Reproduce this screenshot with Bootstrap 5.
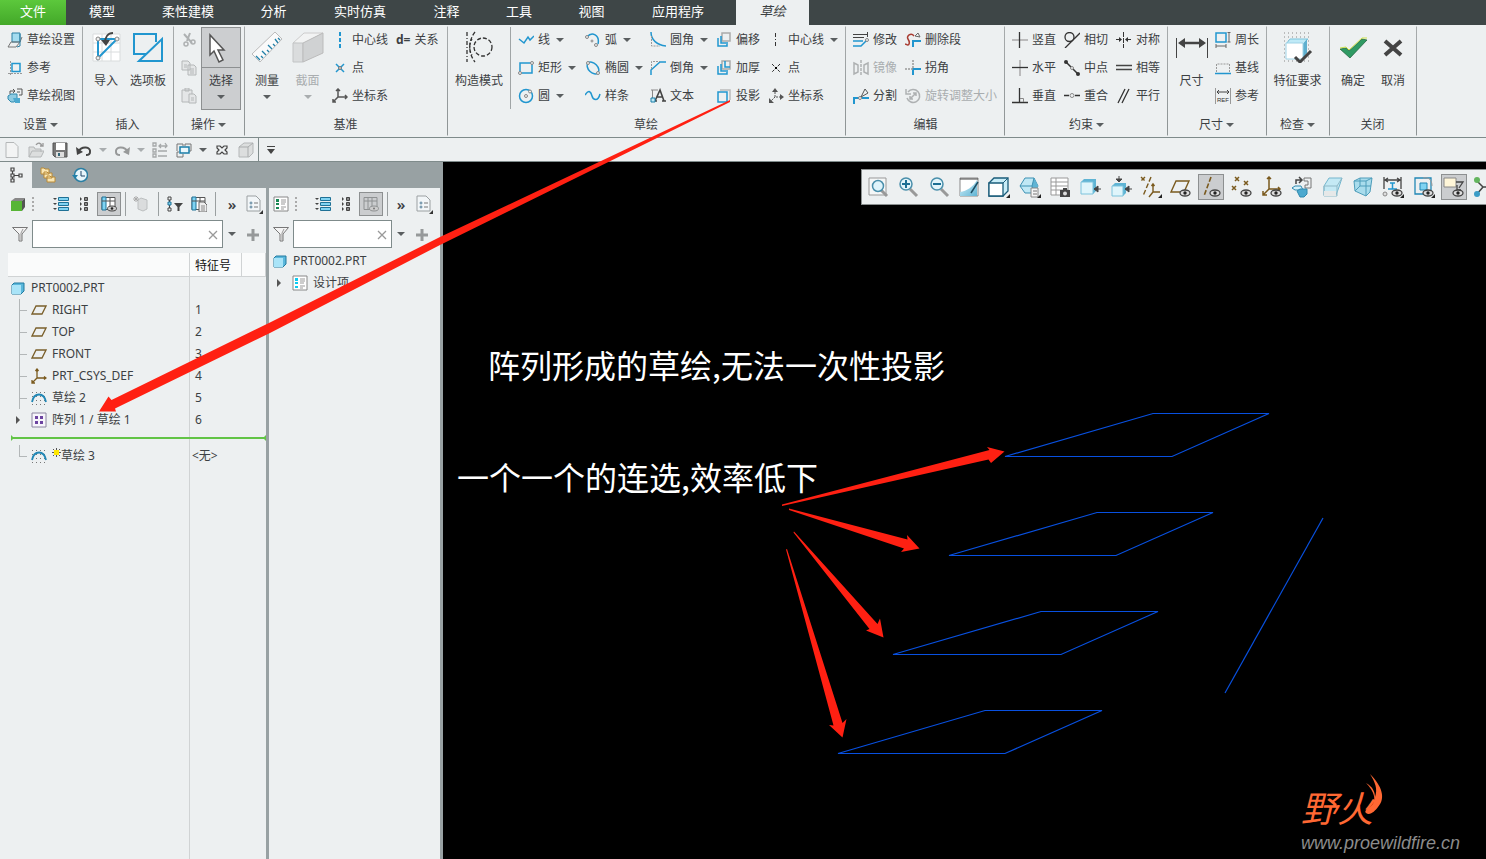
<!DOCTYPE html>
<html lang="zh-CN">
<head>
<meta charset="utf-8">
<meta name="viewport" content="width=device-width, initial-scale=1">
<title>PRT0002 - 草绘</title>
<link href="https://cdn.jsdelivr.net/npm/bootstrap@5.3.0/dist/css/bootstrap.min.css" rel="stylesheet">
<style>
:root{--panel:#edf0f1;--ink:#3c4043;--edge:#7f8b8b;--slate:#98a1a3}
body{font-family:"Noto Sans","Noto Sans CJK SC",sans-serif;font-size:12px;line-height:16px;color:var(--ink);background:var(--panel);overflow:hidden}
button{font:inherit;color:inherit;background:none;border:0;padding:0}
svg{flex:none;fill:none}
.i16{width:16px;height:16px}
.i20{width:22px;height:22px}
.i32{width:32px;height:32px}
.dim{color:#a9adaf}
.caret{width:0;height:0;border:4px solid transparent;border-top-color:#5a5e60;border-bottom:0;flex:none}
.dim .caret{border-top-color:#a9adaf}
/* menu tabs */
.menu-tabs{background:#3e4647;height:25px;font-size:13px}
.menu-tabs a{color:#fff;text-decoration:none;height:25px;line-height:22px;text-align:center}
.menu-tabs .file-tab{background:linear-gradient(#5cc83c,#43a829);width:66px}
.menu-tabs .now-tab{background:var(--panel);color:var(--ink);font-style:italic;width:73px}
.t71{width:71px}.t72{width:72px}.t74{width:74px}.t100{width:100px}.t102{width:102px}.t7{width:7px}
/* ribbon */
.ribbon{height:113px;border-bottom:1px solid var(--edge)}
.rgroup{position:relative;display:grid;grid-template-rows:84px 28px;padding-right:1px;border-right:1px solid;border-image:linear-gradient(transparent 2px,#a7abac 3px,#8d9394 109px,transparent 110px) 1}
.rgroup>.gbody{display:grid;align-items:start}
.glabel{display:flex;align-items:center;justify-content:center;gap:3px;padding-top:4px}
.rb{display:flex;align-items:center;gap:4px;height:28px;padding-top:2px;white-space:nowrap}
.rb .caret{margin-left:2px}
.big{display:flex;flex-direction:column;align-items:center;width:100%;white-space:nowrap}
.big svg{margin:6px 0 5px}
.big span{line-height:26px}
.big .caret{margin-top:1px}
.picked{background:#ccced0;border:1px solid #8d9091;margin-top:2px;height:83px}
.picked svg{margin:4px 0 3px}
.picked .low{border-top:1px solid #8d9091;width:100%;line-height:26px}
.g-set{width:83px}.g-set .gbody{padding-left:7px}
.g-ins{width:91px}.g-ins .gbody{grid-template-columns:42px 42px;padding-left:2px}
.g-op{width:71px}.g-op .gbody{grid-template-columns:20px 40px;padding-left:7px}
.g-dat{width:203px}.g-dat .gbody{grid-template-columns:40px 45px 64px 48px;padding-left:2px}
.g-sk{width:398px}.g-sk .gbody{grid-template-columns:62px 8px 67px 65px 66px 52px 76px}
.g-ed{width:159px}.g-ed .gbody{grid-template-columns:52px 100px;padding-left:7px}
.g-con{width:163px}.g-con .gbody{grid-template-columns:52px 52px 52px;padding-left:7px}
.g-dim{width:99px}.g-dim .gbody{grid-template-columns:47px 46px}
.g-chk{width:63px}.g-end{width:87px}.g-end .gbody{grid-template-columns:40px 40px;padding-left:3px}
.inner-line{border-left:1px solid #a0a5a6;height:82px;margin-top:2px}
/* quick access */
.quick{height:24px;border-bottom:1px solid var(--edge)}
.q24{width:24px;display:flex;justify-content:center}
.q14{width:14px;display:flex;justify-content:center}
.quick .stop{border-left:1px solid var(--edge);height:24px}
/* side panels */
.tree-panel{width:269px;border-right:3px solid var(--slate)}
.item-panel{width:174px;border-right:3px solid var(--slate)}
.ptabs{height:26px;background:var(--slate)}
.ptabs button{width:32px;height:26px}
.ptabs .on{background:var(--panel)}
.ptools{height:32px;display:grid;align-items:center;justify-items:center}
.tree-panel .ptools{padding-left:8px;grid-template-columns:20px 10px 12px 22px 24px 26px 6px 26px 8px 26px 22px 10px 24px 20px}
.item-panel .ptools{padding-left:2px;grid-template-columns:20px 10px 11px 22px 24px 26px 6px 22px 24px}
.toggle{background:#cbcdcf;border:1px solid #8d9091;width:24px;height:24px;display:flex;align-items:center;justify-content:center}
.bar{width:1px;height:24px;background:#9a9fa0}
.dots{width:2px;height:14px;background:repeating-linear-gradient(#aaa 0 2px,transparent 2px 4px)}
.more{font-size:15px;font-weight:600}
.find{height:28px;border:1px solid var(--edge);background:#fff;padding-right:4px}
.find input{width:100%;min-width:0;border:0;outline:0;background:none;height:26px}
.find+.caret{margin:0 11px 0 5px}
.tree-panel .add{margin-right:7px}.item-panel .add{margin-right:12px}
.tree-scroll{margin:5px 0 0 8px;background:linear-gradient(90deg,transparent 181px,#d0d3d4 181px 182px,transparent 182px)}
.tree-tbl{width:100%;table-layout:fixed;border-collapse:separate;border-spacing:0}
.tree-tbl th{font-weight:400;height:24px;background:#fafbfb;border-right:1px solid #d0d3d4;border-bottom:1px solid #d0d3d4;padding:2px 0 0 5px;color:#111}
.tree-tbl td{height:22px;padding:0 0 0 5px;white-space:nowrap}
.tree-tbl td:first-child{padding-left:2px}
.tree-tbl .line-cell{height:14px}
.tree-tbl .none-cell{padding-left:2px}
.node{display:flex;align-items:center;gap:5px;height:22px}
.item-nodes{margin-top:2px;padding-left:3px}
.fold-tri{margin:0 6px 0 5px}
.branch{width:17px;height:22px;margin-right:-1px;background:linear-gradient(#b3b7b8,#b3b7b8) 9px 0/1px 22px no-repeat,linear-gradient(#b3b7b8,#b3b7b8) 9px 11px/8px 1px no-repeat;flex:none}
.branch.last{background-size:1px 11px,8px 1px}
.branch.fold{background:none;display:flex;align-items:center;padding-left:6px}
.tri{width:0;height:0;border:4px solid transparent;border-left-color:#555;border-right:0}
.insert-line{height:2px;background:#62c446;margin-left:1px;display:flex;align-items:center;justify-content:space-between}
.insert-line::before,.insert-line::after{content:"";border:3px solid transparent}
.insert-line::before{border-left-color:#62c446;border-right:0}
.insert-line::after{border-right-color:#62c446;border-left:0}
/* graphics area */
.gfx{background:#000;min-width:0}
.view-bar{margin:7px 0 0 418px;height:36px;background:var(--panel);border:1px solid #8b9090;border-right:0;display:grid;grid-template-columns:repeat(20,minmax(0,1fr)) 17px;align-items:center;justify-items:center;overflow:hidden;padding-left:1px}
.view-bar button{width:26px;height:26px;display:flex;align-items:center;justify-content:center}
.view-bar .down{background:#cbcdcf;border:1px solid #8d9091}
.view-bar .cutoff{justify-content:start;justify-self:start;padding-left:4px}
.note{position:absolute;color:#fff;font-size:32px;line-height:40px;white-space:nowrap;font-family:"Noto Sans CJK SC",sans-serif}
.note-a{left:45px;top:182px}.note-b{left:14px;top:294px}
.scene{position:absolute;left:0;top:0;width:100%;height:100%}
.overlay{position:absolute;left:0;top:0;width:100%;height:100%;pointer-events:none}
.logo{position:absolute;right:24px;bottom:7px;width:161px;height:80px}
.logo-name{position:absolute;left:0;top:20px;color:#ff6833;font:italic 400 36px/36px "Liberation Sans","Noto Sans CJK SC",sans-serif;white-space:nowrap}
.logo-url{position:absolute;left:0;bottom:0;color:#8c8c8c;font:italic 18px/18px "Liberation Sans",sans-serif}
.logo svg{position:absolute;left:61px;top:2px;width:24px;height:52px}
</style>
</head>
<body class="d-flex flex-column vh-100 position-relative">

<svg width="0" height="0" class="position-absolute" aria-hidden="true">
<defs>
<linearGradient id="gl" x1="0" y1="0" x2="1" y2="1"><stop offset="0" stop-color="#d8f3fb"/><stop offset="1" stop-color="#5fb4d4"/></linearGradient>
<symbol id="setup" viewBox="0 0 16 16"><path d="M5 1h8v9H5z" fill="#a4dcf0" stroke="#2a7ea3"/><path d="M4 10h9l2-5M4 10l-3 5h8l4-5" stroke="#777"/><path d="M13 2v12l-3 1" stroke="#2a7ea3"/></symbol>
<symbol id="refs" viewBox="0 0 16 16"><path d="M5 3.500h8v8H5z" stroke="#2196cf" stroke-width="1.500"/><path d="M3.500 1v14M1 13.500h14" stroke="#999" stroke-dasharray="2 1"/></symbol>
<symbol id="skview" viewBox="0 0 16 16"><path d="M3 6V3h5M6 1l2 2-2 2M10 1h5v6h-3M10 4h3" stroke="#555"/><path d="M1 8l3-2h6v5l-3 3H4l-3-3z" fill="#8ecbe2" stroke="#2e89ae"/><path d="M6 10h7v5H8z" fill="#4ca9cf"/></symbol>
<symbol id="import" viewBox="0 0 32 32"><path d="M3 3h27v27H3z" fill="#fff"/><path d="M3 12h27M3 21h27M12 3v27M21 3v27M3 3h27v27H3z" stroke="#d9dcdd"/><path d="M8 8v19L27 8z" stroke="#2196cf" stroke-width="2"/><path d="M23 2c-5 0-8 4-8 10" stroke="#444" stroke-width="2"/><path d="M11 9h9l-4 6z" fill="#444"/><g fill="#eee" stroke="#888"><circle cx="8" cy="8" r="2"/><circle cx="27" cy="8" r="2"/><circle cx="8" cy="27" r="2"/></g></symbol>
<symbol id="palette" viewBox="0 0 32 32"><path d="M14 23H2V3h22v8M7 30L30 8v22z" stroke="#2196cf" stroke-width="2"/></symbol>
<symbol id="cut" viewBox="0 0 16 16" stroke="#aeb1b2"><path d="M3 2l8 9M9 1L6 9" stroke-width="2"/><circle cx="5" cy="12" r="2" stroke-width="1.500"/><circle cx="12" cy="10" r="2" stroke-width="1.500"/></symbol>
<symbol id="copy" viewBox="0 0 16 16" fill="#e4e6e7" stroke="#b4b7b8"><path d="M1 1h6l2 2v7H1zM7 5h6l2 2v8H7z"/><path d="M9 9h4M9 11h4M9 13h4M3 5h3M3 7h3"/></symbol>
<symbol id="paste" viewBox="0 0 16 16" fill="#e4e6e7" stroke="#b4b7b8"><path d="M1 2h10v12H1zM4 0h4v3H4z"/><path d="M8 6h5l2 2v7H8z"/><path d="M10 10h3M10 12h3"/></symbol>
<symbol id="cursor" viewBox="0 0 32 32"><path d="M5 3v20l4-4 5 11 4-2-5-10h6z" fill="#fff" stroke="#555" stroke-width="1.500"/></symbol>
<symbol id="ruler" viewBox="0 0 32 32"><path d="M1 23L24 1l7 7L9 31z" fill="#fafafa" stroke="#bbb"/><path d="M9 29l-4-4M12 27l-2-2M15 24l-4-4M18 21l-2-2M21 18l-4-4M24 15l-2-2M27 12l-3-4M29 9l-2-2" stroke="#2180a8" stroke-width="1.300"/></symbol>
<symbol id="section" viewBox="0 0 32 32"><path d="M1 12L12 2h19L11 13z" fill="#f2f3f3" stroke="#ccc"/><path d="M1 12h10v19H1z" fill="#dadcdd" stroke="#c2c4c5"/><path d="M11 12L31 2v20L11 31z" fill="#d0d2d3" stroke="#bbb"/></symbol>
<symbol id="cl" viewBox="0 0 16 16"><path d="M8 0v16" stroke="#2196cf" stroke-width="2" stroke-dasharray="4 2"/></symbol>
<symbol id="cl2" viewBox="0 0 16 16"><path d="M7.500 1v15" stroke="#333" stroke-dasharray="4 2 1 2"/></symbol>
<symbol id="pt" viewBox="0 0 16 16"><path d="M4 4l8 8M12 4l-8 8" stroke="#2196cf" stroke-width="1.500"/><circle cx="8" cy="8" r="1.500" fill="#ccc" stroke="#777"/></symbol>
<symbol id="pt2" viewBox="0 0 16 16"><path d="M4 4l8 8M12 4l-8 8" stroke="#333" stroke-dasharray="3 1"/><path d="M7 7h2v2H7z" fill="#000"/></symbol>
<symbol id="cs" viewBox="0 0 16 16" stroke="#555" stroke-width="1.500"><path d="M6 1v8h9M6 9l-5 5M4 3l2-2 2 2M13 7l2 2-2 2M1 11v3h3"/></symbol>
<symbol id="cs2" viewBox="0 0 16 16"><path d="M7 4v5h6M7 9l-5 5" stroke="#555" stroke-dasharray="2 1"/><path d="M4 4h6L7 0zM12 6v6l4-3zM1 10v5h5z" fill="#555"/></symbol>
<symbol id="cons" viewBox="0 0 32 32" stroke="#333" stroke-width="1.300"><circle cx="20" cy="16" r="9" stroke-dasharray="4 2"/><path d="M4 1v30" stroke-dasharray="4 2 1 2"/><path d="M12 1c-7 9-7 21 0 30" stroke-dasharray="4 2"/><path d="M9 8c-3 4-3 12 0 16" stroke-dasharray="2 2"/></symbol>
<symbol id="line" viewBox="0 0 16 16"><path d="M1 7l5 4 4-6 2 3 4-4" stroke="#2196cf" stroke-width="1.500"/></symbol>
<symbol id="rect" viewBox="0 0 16 16"><path d="M2 3h12v10H2z" stroke="#2196cf" stroke-width="1.500"/><g fill="#eee" stroke="#888"><circle cx="14" cy="3" r="1.500"/><circle cx="2" cy="13" r="1.500"/></g></symbol>
<symbol id="circ" viewBox="0 0 16 16"><circle cx="8" cy="8" r="6.500" stroke="#2196cf" stroke-width="1.500"/><g fill="#eee" stroke="#888"><circle cx="8" cy="8" r="1.500"/><circle cx="12" cy="3.500" r="1.500"/></g></symbol>
<symbol id="arc" viewBox="0 0 16 16"><path d="M2 5c5-6 13-2 11 7" stroke="#2196cf" stroke-width="1.500"/><g fill="#eee" stroke="#888"><circle cx="2" cy="5" r="1.500"/><circle cx="11" cy="13" r="1.500"/><circle cx="7" cy="9" r="1"/></g></symbol>
<symbol id="ell" viewBox="0 0 16 16"><ellipse cx="8" cy="8" rx="7" ry="4.500" transform="rotate(45 8 8)" stroke="#2196cf" stroke-width="1.500"/><g fill="#eee" stroke="#888"><circle cx="3" cy="3" r="1.500"/><circle cx="13" cy="13" r="1.500"/></g></symbol>
<symbol id="spl" viewBox="0 0 16 16"><path d="M0 7c4-6 6-3 7 1s6 6 8-2" stroke="#2196cf" stroke-width="1.500"/></symbol>
<symbol id="fil" viewBox="0 0 16 16"><path d="M1 0c0 8 6 13 15 14" stroke="#2196cf" stroke-width="1.500"/><path d="M1.500 4v10H10" stroke="#999" stroke-dasharray="2 1"/></symbol>
<symbol id="cha" viewBox="0 0 16 16"><path d="M1 15v-5l9-8h6" stroke="#2196cf" stroke-width="1.500"/><path d="M1.500 9V1.500H10" stroke="#999" stroke-dasharray="2 1"/></symbol>
<symbol id="txt" viewBox="0 0 16 16"><path d="M1 2h7M2.500 2v8" stroke="#888"/><path d="M5 13l5-11 4 11M7 9h6M12 13h4M4 13h3" stroke="#444" stroke-width="1.600"/><path d="M1 10h4v4H1z" fill="#bde7f5" stroke="#1a7ea8"/></symbol>
<symbol id="off" viewBox="0 0 16 16"><path d="M6 1h8v8H6z" stroke="#aaa" stroke-width="1.500"/><path d="M5 4v7h7M2 6v8h9v-2" stroke="#2196cf" stroke-width="1.500"/></symbol>
<symbol id="thk" viewBox="0 0 16 16"><path d="M6 1h8v8H6z" stroke="#aaa" stroke-width="1.500"/><path d="M9 1v6h5M5 4v7h7M2 6v8h9v-2" stroke="#2196cf" stroke-width="1.500"/></symbol>
<symbol id="prj" viewBox="0 0 16 16"><path d="M4 2h10v10" stroke="#bbb" stroke-width="1.500"/><path d="M2 4v10h9V4z" stroke="#2196cf" stroke-width="1.500"/></symbol>
<symbol id="mod" viewBox="0 0 16 16"><path d="M0 2.500h15M14.500 0v5M0 5.500h11" stroke="#444"/><path d="M0 9h10M0 14h8l5-5" stroke="#2196cf" stroke-width="1.500"/><circle cx="14" cy="8" r="1.500" stroke="#888"/></symbol>
<symbol id="mir" viewBox="0 0 16 16" stroke="#aeb1b2" stroke-width="1.500"><path d="M1 3l4 2v7l-4 2zM15 3l-4 2v7l4 2z"/><path d="M8 0v16" stroke-dasharray="3 1"/></symbol>
<symbol id="div" viewBox="0 0 16 16"><path d="M1 16v-6h5M9 10h7" stroke="#2196cf" stroke-width="2"/><circle cx="7" cy="10" r="1.500" stroke="#888"/><path d="M8 9l4-8 3 4z" stroke="#555"/></symbol>
<symbol id="del" viewBox="0 0 16 16"><path d="M0 12c5 3 5-2 3-5s3-7 6-3" stroke="#a83c32" stroke-width="1.500"/><path d="M8 15V9h8" stroke="#2196cf" stroke-width="2"/><path d="M10 4l3-3 2 4z" stroke="#666"/></symbol>
<symbol id="cor" viewBox="0 0 16 16"><path d="M8 15V9h8" stroke="#2196cf" stroke-width="2"/><path d="M8 0v8M0 9h8" stroke="#999" stroke-dasharray="2 1" stroke-width="1.500"/></symbol>
<symbol id="rot" viewBox="0 0 16 16" stroke="#aeb1b2" stroke-width="1.500"><path d="M3 4a6.500 6.500 0 1 1-1 6M1 1v5h5M5 11l6-6M8 5h3v3M5 8v3h3"/></symbol>
<symbol id="ver" viewBox="0 0 16 16"><path d="M0 8h16" stroke="#aaa" stroke-width="1.500"/><path d="M7.500 0v16" stroke="#333" stroke-width="1.300"/></symbol>
<symbol id="hor" viewBox="0 0 16 16"><path d="M8 0v16" stroke="#aaa" stroke-width="1.500"/><path d="M0 7.500h16" stroke="#333" stroke-width="1.300"/></symbol>
<symbol id="per" viewBox="0 0 16 16"><path d="M7.500 0v14M0 14.500h16" stroke="#333" stroke-width="1.300"/><path d="M8 10.500h3.500V14" stroke="#888"/></symbol>
<symbol id="tan" viewBox="0 0 16 16" stroke="#333" stroke-width="1.300"><circle cx="5.500" cy="5" r="4.500"/><path d="M1 16L16 1"/></symbol>
<symbol id="mid" viewBox="0 0 16 16"><path d="M2 2l12 12" stroke="#333" stroke-width="1.500"/><circle cx="2" cy="2" r="2" fill="#333"/><circle cx="14" cy="14" r="2" fill="#333"/><circle cx="8" cy="8" r="1.500" fill="#eee" stroke="#888"/></symbol>
<symbol id="coi" viewBox="0 0 16 16"><path d="M0 7.500h5M11 7.500h5" stroke="#333" stroke-width="1.300"/><circle cx="8" cy="7.500" r="2" stroke="#888"/></symbol>
<symbol id="sym" viewBox="0 0 16 16"><path d="M7.500 0v16" stroke="#333" stroke-dasharray="5 1"/><path d="M0 7.500h5M10 7.500h5" stroke="#333"/><path d="M3 5l3 2.500L3 10zM12 5L9 7.500l3 2.500z" fill="#333"/></symbol>
<symbol id="eq" viewBox="0 0 16 16"><path d="M0 5.500h16M0 9.500h16" stroke="#444" stroke-width="1.300"/></symbol>
<symbol id="par" viewBox="0 0 16 16"><path d="M2 15L9 1M6 15l7-14" stroke="#333" stroke-width="1.300"/></symbol>
<symbol id="dim" viewBox="0 0 32 32"><path d="M.5 7v20M31.500 7v20" stroke="#444"/><path d="M6 12h20" stroke="#444" stroke-width="2.500"/><path d="M2 12l7-5v10zM30 12l-7-5v10z" fill="#444"/></symbol>
<symbol id="peri" viewBox="0 0 16 16"><path d="M1 1h10v9H1z" stroke="#2196cf" stroke-width="1.500"/><path d="M14 1v9M12.500 .5h3M12.500 10h3M1 14h10M1 12v4M11 12v4" stroke="#666"/></symbol>
<symbol id="base" viewBox="0 0 16 16"><path d="M1.500 12V4h13v8" stroke="#999" stroke-dasharray="2 1"/><path d="M0 13.500h16" stroke="#2196cf" stroke-width="1.500"/></symbol>
<symbol id="refd" viewBox="0 0 16 16"><path d="M.5 0v16M15.500 0v16" stroke="#999"/><path d="M2 4h12M4 2L2 4l2 2M12 2l2 2-2 2" stroke="#444"/><text x="2" y="14" font-size="6" font-family="Liberation Sans" fill="#333">REF</text></symbol>
<symbol id="freq" viewBox="0 0 32 32"><path d="M2 2h28M2 6h28M2 10h28M2 14h28M2 18h28M2 22h28M2 26h28M2 30h28" stroke="#888" stroke-dasharray="1 3"/><path d="M4 13l4-5h18l-5 5z" fill="#bfeaf7" stroke="#7dc4dc"/><path d="M21 13l4-5v14l-4 5z" fill="#5fb0cf"/><path d="M4 12h17v16H4z" fill="#fff" stroke="#9fd3e6"/><path d="M13 26l5 5 11-11" stroke="#444" stroke-width="3"/></symbol>
<symbol id="ok" viewBox="0 0 32 32"><path d="M3 18l6-1 3 3L25 8l5 1-17 18z" fill="#2f9a63" stroke="#1a5c38" stroke-width=".7"/><path d="M3 17l6-1 3 3L25 7h5" stroke="#cde34a"/></symbol>
<symbol id="no" viewBox="0 0 32 32"><path d="M8 10l16 14M24 10L8 24" stroke="#444" stroke-width="4"/></symbol>
<symbol id="new" viewBox="0 0 16 16"><path d="M2 .5h8l4 4v11H2z" fill="#f3f4f4" stroke="#b4b7b8"/></symbol>
<symbol id="open" viewBox="0 0 16 16"><path d="M1 15V5h5l1 2h6v3M1 15l3-6h12l-3 6z" fill="#dcdede" stroke="#b4b7b8"/><path d="M8 3c2-3 5-2 6 1M15 1v3h-3" stroke="#999" stroke-width="1.300"/></symbol>
<symbol id="save" viewBox="0 0 16 16"><path d="M1 1h14v14H3l-2-2z" fill="#777" stroke="#555"/><path d="M4 1h9v7H4z" fill="#fff"/><path d="M4 10h8v5H4z" fill="#ddd"/><path d="M6 11h2v3H6z" fill="#367"/></symbol>
<symbol id="undo" viewBox="0 0 16 16"><path d="M2 10c4-7 13-5 12 0 0 2-2 3-4 3" stroke="#444" stroke-width="2"/><path d="M0 5l1 8 6-3z" fill="#444"/></symbol>
<symbol id="regen" viewBox="0 0 16 16"><path d="M1 1h3v3H1zM1 7h3v3H1zM1 12h3v3H1zM6 9h9M6 14h9M7 4h8M9 2L7 4l2 2M13 1l2 3-2 2" stroke="#a5a8a9" stroke-width="1.300"/></symbol>
<symbol id="wins" viewBox="0 0 16 16"><path d="M1 9V2h6v2M9 4V2h6v7h-2" stroke="#777"/><path d="M4 5h9v6H4z" fill="#e9f7fc" stroke="#1a7ea8" stroke-width="1.500"/><path d="M3 10H1v5h6v-3" stroke="#777"/></symbol>
<symbol id="xx" viewBox="0 0 16 16"><path d="M3 4h3l2 2 2-2h3v2l-2 2 2 2v2h-3l-2-2-2 2H3v-2l2-2-2-2z" stroke="#444" stroke-width="1.200"/></symbol>
<symbol id="gbox" viewBox="0 0 16 16"><path d="M1 5l5-4h9v10l-4 4H1z" fill="#dcdede" stroke="#b4b7b8"/><path d="M1 5h9v10M10 5l5-4" stroke="#a9acad"/></symbol>
<symbol id="tree" viewBox="0 0 16 16" stroke="#444" stroke-width="1.200"><path d="M3 1h3v3H3zM3 7h3v3H3zM3 12h3v3H3zM11 7h3v3h-3zM4.500 4v3M4.500 10v2M6 8.500h5"/></symbol>
<symbol id="fold" viewBox="0 0 16 16" fill="#f9e6b3" stroke="#b98a36"><path d="M1 1h3l1 1h4v5H1zM4 5h3l1 1h4v5H4zM7 9h3l1 1h4v5H7z"/></symbol>
<symbol id="clock" viewBox="0 0 16 16"><circle cx="9" cy="8" r="6.500" fill="#e8f6fb" stroke="#2a7ea3" stroke-width="1.500"/><path d="M9 4v5h4" stroke="#246"/><path d="M0 8h6l-3 4z" fill="#2180a8"/></symbol>
<symbol id="gcube" viewBox="0 0 16 16"><path d="M1 5l4-3h10l-3 3z" fill="#888"/><path d="M12 5l3-3v9l-3 4z" fill="#555"/><path d="M1 5h11v10H1z" fill="#57b536"/></symbol>
<symbol id="lst" viewBox="0 0 16 16"><path d="M5.500 1.500h10v3h-10zM5.500 6.500h10v3h-10zM5.500 11.500h10v3h-10z" fill="#7fd3f2" stroke="#1f7196"/><path d="M0 2h4L2 4zM0 7h4L2 9zM0 12h4l-2 2z" fill="#444"/></symbol>
<symbol id="lst2" viewBox="0 0 16 16"><path d="M8.500 1.500h3v3h-3zM8.500 6.500h3v3h-3zM8.500 11.500h3v3h-3z" fill="#888" stroke="#444"/><path d="M4 1v4l2-2zM4 6v4l2-2zM4 11v4l2-2z" fill="#444"/></symbol>
<symbol id="cols" viewBox="0 0 16 16"><path d="M1 1.500h13v12H1z" fill="#fff" stroke="#555"/><path d="M1 1h4v13H1z" fill="#7fd3f2" stroke="#1f7196"/><path d="M9 2v9M1 5h13" stroke="#555"/><ellipse cx="11" cy="12.500" rx="4.500" ry="2.500" fill="#ccc" stroke="#444"/><circle cx="11" cy="12.500" r="1.300" fill="#222"/></symbol>
<symbol id="colsg" viewBox="0 0 16 16"><path d="M1 1.500h13v12H1zM5 2v12M9 2v9M1 5h13" stroke="#8e9192"/><ellipse cx="11" cy="12.500" rx="4.500" ry="2.500" fill="#ccc" stroke="#8e9192"/><circle cx="11" cy="12.500" r="1" fill="#777"/></symbol>
<symbol id="shape" viewBox="0 0 16 16"><path d="M5 4l3-2 6 2v9l-4 2-5-2z" fill="#dadcdd" stroke="#bcbfc0"/><path d="M0 3h6M3 0v6M1 1l4 4M5 1L1 5" stroke="#aaa"/></symbol>
<symbol id="tfil" viewBox="0 0 16 16"><path d="M1 1h3v3H1zM1 12h3v3H1zM2.500 4v8" stroke="#444"/><path d="M1 6h3v3H1z" fill="#7fd3f2" stroke="#1f7196"/><path d="M7 7h9l-3.500 4v4h-2v-4z" fill="#444"/></symbol>
<symbol id="cpg" viewBox="0 0 16 16"><path d="M1 1.500h13v12H1z" fill="#fff" stroke="#555"/><path d="M1 1h4v13H1z" fill="#7fd3f2" stroke="#1f7196"/><path d="M9 2v9M1 5h13" stroke="#555"/><path d="M8 6h5l3 3v7H8z" fill="#eee" stroke="#666"/><path d="M10 10h4M10 12h4M10 14h4" stroke="#888"/></symbol>
<symbol id="doc" viewBox="0 0 18 20"><path d="M2 2h9l4 4v11H2z" fill="#f2f6f8" stroke="#9ba0a2"/><path d="M9 9h4M9 13h4" stroke="#777"/><circle cx="6" cy="9" r="1" stroke="#56809a"/><circle cx="6" cy="13" r="1" stroke="#56809a"/><path d="M18 16v4h-4z" fill="#333"/></symbol>
<symbol id="fun" viewBox="0 0 16 16"><path d="M.5 1.500h15L10 8v7H7V8z" fill="#f4f4f4" stroke="#777"/><path d="M11 3l-2 4v7" stroke="#999"/></symbol>
<symbol id="part" viewBox="0 0 16 16"><path d="M2 5l2-2h10v8l-3 3H2z" fill="#5bb8dc" stroke="#217ba0"/><path d="M2 5h9v9H2z" fill="#a9e4f8"/></symbol>
<symbol id="plane" viewBox="0 0 16 16"><path d="M5 4h10l-4 8H1z" stroke="#7a5f2b" stroke-width="1.300"/></symbol>
<symbol id="bcs" viewBox="0 0 16 16" stroke="#7a5a1e" stroke-width="1.300"><path d="M6 1v9h9M6 10l-5 5M4.500 3L6 1l1.500 2M13 8.500l2 1.500-2 1.500M1 12v3h3"/></symbol>
<symbol id="skt" viewBox="0 0 16 16"><path d="M1 2.500h14M1 6.500h14M1 10.500h14M1 14.500h14" stroke="#777" stroke-dasharray="1 3"/><path d="M1 12C3 2 13 2 15 12" stroke="#2187b5" stroke-width="1.800"/></symbol>
<symbol id="patt" viewBox="0 0 16 16"><path d="M1 1h14v14H1z" fill="#f7f5fb" stroke="#8c86a0"/><path d="M4 4h3v3H4zM9 4h3v3H9zM4 9h3v3H4zM9 9h3v3H9z" fill="#6c43a0"/></symbol>
<symbol id="sheet" viewBox="0 0 16 16"><path d="M1 1h14v14H1z" fill="#fff" stroke="#888"/><path d="M3 3h3v3H3zM3 7h3v2H3zM3 11h3v2H3z" fill="currentColor"/><path d="M8 4h5M8 6h5M8 8h4M8 11h5M8 13h3" stroke="#999"/></symbol>
<symbol id="eye" viewBox="0 0 22 22"><ellipse cx="15" cy="17" rx="5" ry="3" fill="#ddd" stroke="#444" stroke-width="1.300"/><circle cx="15" cy="17" r="1.700" fill="#222"/></symbol>
<symbol id="v1" viewBox="0 0 22 22"><path d="M2 2h17v17H2z" fill="#f5f7f7" stroke="#999"/><path d="M14 14l6 6" stroke="#999" stroke-width="3"/><circle cx="11" cy="10" r="5.500" fill="#dff4fb" stroke="#4a8fab" stroke-width="1.500"/></symbol>
<symbol id="mag" viewBox="0 0 22 22"><path d="M13 13l7 7" stroke="#999" stroke-width="3"/><circle cx="9" cy="8" r="6" fill="#e2f5fb" stroke="#4a8fab" stroke-width="1.500"/></symbol>
<symbol id="v4" viewBox="0 0 22 22"><path d="M2 2h18v18H2z" fill="#fff" stroke="#888"/><path d="M2 16C9 15 15 11 19 4v16H2z" fill="url(#gl)"/><path d="M2 3h18" stroke="#444"/><path d="M13 17l7-11" stroke="#1b4d63" stroke-width="1.500"/></symbol>
<symbol id="v5" viewBox="0 0 22 22"><path d="M1 7l5-5h14v13l-5 5H1z" fill="#c9edf8" stroke="#1a5c7a" stroke-width="1.300"/><path d="M1 7h14v13H1z" fill="#fff" stroke="#1a5c7a" stroke-width="1.300"/><path d="M15 7l5-5" stroke="#1a5c7a"/><path d="M22 18v4h-4z" fill="#222"/></symbol>
<symbol id="v6" viewBox="0 0 22 22"><path d="M1 10l5-8h9l4 8-4 7H6z" fill="#bfe8f5" stroke="#3d91b3"/><path d="M15 2l4 8-4 7-2-7z" fill="#5fb4d4"/><path d="M1 10h12l2-8M13 10l2 7" stroke="#3d91b3"/><path d="M12 12h7v9h-7z" fill="#f5f5f5" stroke="#888"/><path d="M14 15h4M14 18h4" stroke="#777"/><path d="M22 18v4h-4z" fill="#222"/></symbol>
<symbol id="v7" viewBox="0 0 22 22"><path d="M2 2h17v17H2z" fill="#fff" stroke="#999"/><path d="M2 6h17M2 10h17M2 14h17M7 2v17" stroke="#999"/><path d="M11 14h10v7H11z" fill="#444"/><path d="M14 12h4v2h-4z" fill="#444"/><circle cx="16" cy="17.500" r="2" fill="#ddd"/></symbol>
<symbol id="v8" viewBox="0 0 22 22"><path d="M2 6l3-3h12v12l-3 3H2z" fill="#5fb4d4"/><path d="M2 6h12v12H2z" fill="#dff5fb" stroke="#7cc3dc"/><path d="M17 13h5M15 13l4-3v6z" fill="#444" stroke="#444"/></symbol>
<symbol id="v9" viewBox="0 0 22 22"><path d="M2 10l3-3h11v10l-3 3H2z" fill="#5fb4d4"/><path d="M2 10h11v10H2z" fill="#dff5fb" stroke="#7cc3dc"/><path d="M17 13h5M15 13l4-3v6zM9 0v4M9 6L6 3h6z" fill="#444" stroke="#444"/></symbol>
<symbol id="v10" viewBox="0 0 22 22" stroke="#7a5a1e" stroke-width="1.400"><path d="M1 1l4 4M5 1L1 5M11 1L3 20" stroke-dasharray="5 2"/><path d="M13 9v7h7M13 16l-4 5M11.500 10L13 8l1.500 2"/><path d="M22 18v4h-4z" fill="#222" stroke="none"/></symbol>
<symbol id="v11" viewBox="0 0 22 22"><path d="M6 5h13l-5 11H1z" stroke="#7a5a1e" stroke-width="1.400"/><use href="#eye"/></symbol>
<symbol id="v12" viewBox="0 0 22 22"><path d="M11 1L4 20" stroke="#7a5a1e" stroke-width="1.600" stroke-dasharray="5 2"/><use href="#eye"/></symbol>
<symbol id="v13" viewBox="0 0 22 22"><path d="M4 1l4 4M8 1L4 5M13 5l4 4M17 5l-4 4M1 10l4 4M5 10l-4 4" stroke="#7a5a1e" stroke-width="1.500"/><use href="#eye"/></symbol>
<symbol id="v14" viewBox="0 0 22 22"><path d="M8 1v12h11M8 13l-6 6M6 3l2-2 2 2M17 11l2 2-2 2M2 15v4h4" stroke="#7a5a1e" stroke-width="1.500"/><use href="#eye"/></symbol>
<symbol id="v15" viewBox="0 0 22 22"><path d="M5 8V4h6M8 1l3 3-3 3" stroke="#444" stroke-width="1.500"/><path d="M13 2h7v10h-6V9h3V5h-4z" stroke="#777"/><path d="M1 12l3-2h6l2 4H4z" fill="#d5f1fa" stroke="#2e89ae"/><path d="M6 15l3-2h7v5l-3 3H9z" fill="#4ca9cf" stroke="#2e89ae"/></symbol>
<symbol id="v16" viewBox="0 0 22 22"><path d="M2 10l5-8h13l-3 9-3 8H2z" fill="#c4e9f4" stroke="#74b6cd"/><path d="M2 10h13l5-8M15 10v10H2V10" stroke="#8fb9c7"/><path d="M2 15h12v5H2z" fill="#e6e8e8"/></symbol>
<symbol id="v17" viewBox="0 0 22 22"><path d="M2 5l6-3h12l-2 14-4 4-11-5z" fill="#a9dcec" stroke="#4e9dba"/><path d="M2 5h12l6-3M14 5v15M3 15l5-5V2M8 10h11" stroke="#4e9dba"/></symbol>
<symbol id="v18" viewBox="0 0 22 22"><path d="M2 1v12M19 1v12M3 4h15M6 2L3 4l3 2M15 2l3 2-3 2" stroke="#444" stroke-width="1.300"/><path d="M6 13h9M10.500 7v6M8 7h5" stroke="#2196cf" stroke-width="1.500"/><circle cx="3" cy="18" r="2" fill="#ddd" stroke="#888"/><use href="#eye"/><path d="M22 18v4h-4z" fill="#222"/></symbol>
<symbol id="v19" viewBox="0 0 22 22"><path d="M2 2h16v16H2z" stroke="#2187b5" stroke-width="1.300"/><path d="M7 7h7v7H7z" fill="#7fd3f2" stroke="#2187b5"/><path d="M10 2c6-1 9 2 9 8" stroke="#999"/><use href="#eye"/><path d="M22 18v4h-4z" fill="#222"/></symbol>
<symbol id="v20" viewBox="0 0 22 22"><path d="M1 2h12v9H1z" fill="#fff6d8" stroke="#888"/><path d="M13 6h7l-4 6M14 9v5h4" stroke="#444" stroke-width="1.300"/><use href="#eye"/></symbol>
<symbol id="v21" viewBox="0 0 22 22"><path d="M4 5l6 6-6 7M10 11h9" stroke="#444" stroke-width="1.500"/><circle cx="4" cy="4" r="3" fill="#63b55e"/><circle cx="4" cy="18" r="3" fill="#3a9cc6"/></symbol>
</defs>
</svg>

<nav class="menu-tabs d-flex flex-nowrap">
<a href="#" class="file-tab">文件</a><a href="#" class="t72">模型</a><a href="#" class="t100">柔性建模</a><a href="#" class="t71">分析</a><a href="#" class="t102">实时仿真</a><a href="#" class="t71">注释</a><a href="#" class="t74">工具</a><a href="#" class="t71">视图</a><a href="#" class="t102">应用程序</a><span class="t7"></span><a href="#" class="now-tab" aria-current="page">草绘</a>
</nav>

<section class="ribbon d-flex">
 <div class="rgroup g-set"><div class="gbody"><div>
  <button class="rb"><svg class="i16"><use href="#setup"/></svg>草绘设置</button>
  <button class="rb"><svg class="i16"><use href="#refs"/></svg>参考</button>
  <button class="rb"><svg class="i16"><use href="#skview"/></svg>草绘视图</button></div></div>
  <button class="glabel">设置<i class="caret"></i></button></div>
 <div class="rgroup g-ins"><div class="gbody">
  <button class="big"><svg class="i32"><use href="#import"/></svg><span>导入</span></button>
  <button class="big"><svg class="i32"><use href="#palette"/></svg><span>选项板</span></button></div>
  <div class="glabel">插入</div></div>
 <div class="rgroup g-op"><div class="gbody"><div>
  <button class="rb" aria-label="剪切"><svg class="i16"><use href="#cut"/></svg></button>
  <button class="rb" aria-label="复制"><svg class="i16"><use href="#copy"/></svg></button>
  <button class="rb" aria-label="粘贴"><svg class="i16"><use href="#paste"/></svg></button></div>
  <button class="big picked"><svg class="i32"><use href="#cursor"/></svg><span class="low">选择</span><i class="caret"></i></button></div>
  <button class="glabel">操作<i class="caret"></i></button></div>
 <div class="rgroup g-dat"><div class="gbody">
  <button class="big"><svg class="i32"><use href="#ruler"/></svg><span>测量</span><i class="caret"></i></button>
  <button class="big dim pe-1" disabled><svg class="i32"><use href="#section"/></svg><span>截面</span><i class="caret"></i></button>
  <div><button class="rb"><svg class="i16"><use href="#cl"/></svg>中心线</button>
  <button class="rb"><svg class="i16"><use href="#pt"/></svg>点</button>
  <button class="rb"><svg class="i16"><use href="#cs"/></svg>坐标系</button></div>
  <div><button class="rb"><b>d=</b>关系</button></div></div>
  <div class="glabel">基准</div></div>
 <div class="rgroup g-sk"><div class="gbody">
  <button class="big"><svg class="i32"><use href="#cons"/></svg><span>构造模式</span></button>
  <div class="inner-line"></div>
  <div><button class="rb"><svg class="i16"><use href="#line"/></svg>线<i class="caret"></i></button>
  <button class="rb"><svg class="i16"><use href="#rect"/></svg>矩形<i class="caret"></i></button>
  <button class="rb"><svg class="i16"><use href="#circ"/></svg>圆<i class="caret"></i></button></div>
  <div><button class="rb"><svg class="i16"><use href="#arc"/></svg>弧<i class="caret"></i></button>
  <button class="rb"><svg class="i16"><use href="#ell"/></svg>椭圆<i class="caret"></i></button>
  <button class="rb"><svg class="i16"><use href="#spl"/></svg>样条</button></div>
  <div><button class="rb"><svg class="i16"><use href="#fil"/></svg>圆角<i class="caret"></i></button>
  <button class="rb"><svg class="i16"><use href="#cha"/></svg>倒角<i class="caret"></i></button>
  <button class="rb"><svg class="i16"><use href="#txt"/></svg>文本</button></div>
  <div><button class="rb"><svg class="i16"><use href="#off"/></svg>偏移</button>
  <button class="rb"><svg class="i16"><use href="#thk"/></svg>加厚</button>
  <button class="rb"><svg class="i16"><use href="#prj"/></svg>投影</button></div>
  <div><button class="rb"><svg class="i16"><use href="#cl2"/></svg>中心线<i class="caret"></i></button>
  <button class="rb"><svg class="i16"><use href="#pt2"/></svg>点</button>
  <button class="rb"><svg class="i16"><use href="#cs2"/></svg>坐标系</button></div></div>
  <div class="glabel">草绘</div></div>
 <div class="rgroup g-ed"><div class="gbody">
  <div><button class="rb"><svg class="i16"><use href="#mod"/></svg>修改</button>
  <button class="rb dim" disabled><svg class="i16"><use href="#mir"/></svg>镜像</button>
  <button class="rb"><svg class="i16"><use href="#div"/></svg>分割</button></div>
  <div><button class="rb"><svg class="i16"><use href="#del"/></svg>删除段</button>
  <button class="rb"><svg class="i16"><use href="#cor"/></svg>拐角</button>
  <button class="rb dim" disabled><svg class="i16"><use href="#rot"/></svg>旋转调整大小</button></div></div>
  <div class="glabel">编辑</div></div>
 <div class="rgroup g-con"><div class="gbody">
  <div><button class="rb"><svg class="i16"><use href="#ver"/></svg>竖直</button>
  <button class="rb"><svg class="i16"><use href="#hor"/></svg>水平</button>
  <button class="rb"><svg class="i16"><use href="#per"/></svg>垂直</button></div>
  <div><button class="rb"><svg class="i16"><use href="#tan"/></svg>相切</button>
  <button class="rb"><svg class="i16"><use href="#mid"/></svg>中点</button>
  <button class="rb"><svg class="i16"><use href="#coi"/></svg>重合</button></div>
  <div><button class="rb"><svg class="i16"><use href="#sym"/></svg>对称</button>
  <button class="rb"><svg class="i16"><use href="#eq"/></svg>相等</button>
  <button class="rb"><svg class="i16"><use href="#par"/></svg>平行</button></div></div>
  <button class="glabel">约束<i class="caret"></i></button></div>
 <div class="rgroup g-dim"><div class="gbody">
  <button class="big"><svg class="i32"><use href="#dim"/></svg><span>尺寸</span></button>
  <div><button class="rb"><svg class="i16"><use href="#peri"/></svg>周长</button>
  <button class="rb"><svg class="i16"><use href="#base"/></svg>基线</button>
  <button class="rb"><svg class="i16"><use href="#refd"/></svg>参考</button></div></div>
  <button class="glabel">尺寸<i class="caret"></i></button></div>
 <div class="rgroup g-chk"><div class="gbody">
  <button class="big"><svg class="i32"><use href="#freq"/></svg><span>特征要求</span></button></div>
  <button class="glabel">检查<i class="caret"></i></button></div>
 <div class="rgroup g-end"><div class="gbody">
  <button class="big"><svg class="i32"><use href="#ok"/></svg><span>确定</span></button>
  <button class="big"><svg class="i32"><use href="#no"/></svg><span>取消</span></button></div>
  <div class="glabel">关闭</div></div>
</section>

<div class="quick d-flex align-items-center">
 <button class="q24" aria-label="新建"><svg class="i16"><use href="#new"/></svg></button>
 <button class="q24" aria-label="打开"><svg class="i16"><use href="#open"/></svg></button>
 <button class="q24" aria-label="保存"><svg class="i16"><use href="#save"/></svg></button>
 <button class="q24" aria-label="撤消"><svg class="i16"><use href="#undo"/></svg></button>
 <button class="q14 dim" aria-label="撤消列表"><i class="caret"></i></button>
 <button class="q24 dim" aria-label="重做"><svg class="i16 opacity-50" viewBox="0 0 16 16"><use href="#undo" transform="matrix(-1 0 0 1 16 0)" width="16" height="16"/></svg></button>
 <button class="q14 dim" aria-label="重做列表"><i class="caret"></i></button>
 <button class="q24" aria-label="重新生成"><svg class="i16"><use href="#regen"/></svg></button>
 <button class="q24" aria-label="窗口"><svg class="i16"><use href="#wins"/></svg></button>
 <button class="q14" aria-label="窗口列表"><i class="caret"></i></button>
 <button class="q24" aria-label="关闭窗口"><svg class="i16"><use href="#xx"/></svg></button>
 <button class="q24" aria-label="模型显示"><svg class="i16"><use href="#gbox"/></svg></button>
 <span class="stop"></span>
 <button class="q24" aria-label="自定义"><svg width="10" height="10" viewBox="0 0 10 10"><path d="M1 1.500h8" stroke="#444"/><path d="M1 4h8L5 9z" fill="#444"/></svg></button>
</div>

<main class="d-flex flex-fill">
 <aside class="tree-panel d-flex flex-column flex-shrink-0">
  <div class="ptabs d-flex"><button class="on" aria-label="模型树"><svg class="i16"><use href="#tree"/></svg></button><button aria-label="文件夹"><svg class="i16"><use href="#fold"/></svg></button><button aria-label="历史"><svg class="i16"><use href="#clock"/></svg></button></div>
  <div class="ptools">
   <svg class="i16"><use href="#gcube"/></svg><span class="dots"></span><span></span>
   <svg class="i16"><use href="#lst"/></svg><svg class="i16"><use href="#lst2"/></svg>
   <button class="toggle" aria-label="树列"><svg class="i16"><use href="#cols"/></svg></button><span class="bar"></span>
   <svg class="i16"><use href="#shape"/></svg><span class="bar"></span>
   <svg class="i16"><use href="#tfil"/></svg><svg class="i16"><use href="#cpg"/></svg><span class="bar"></span>
   <span class="more">»</span><svg width="18" height="20"><use href="#doc"/></svg>
  </div>
  <div class="d-flex align-items-center ps-2">
   <svg class="i16 ms-1 me-1"><use href="#fun"/></svg>
   <div class="find d-flex align-items-center flex-fill"><input type="text" aria-label="搜索模型树"><button aria-label="清除"><svg width="10" height="10" viewBox="0 0 10 10"><path d="M1 1l8 8M9 1L1 9" stroke="#999" stroke-width="1.300"/></svg></button></div>
   <i class="caret"></i><button class="add" aria-label="添加"><svg width="12" height="12" viewBox="0 0 12 12"><path d="M6 0v12M0 6h12" stroke="#96999a" stroke-width="3"/></svg></button>
  </div>
  <div class="tree-scroll flex-fill">
   <table class="tree-tbl">
    <colgroup><col width="182"><col width="52"><col></colgroup>
    <thead><tr><th aria-label="名称"></th><th>特征号</th><th></th></tr></thead>
    <tbody>
    <tr><td><div class="node"><svg class="i16"><use href="#part"/></svg>PRT0002.PRT</div></td><td></td><td></td></tr>
    <tr><td><div class="node"><i class="branch"></i><svg class="i16"><use href="#plane"/></svg>RIGHT</div></td><td>1</td><td></td></tr>
    <tr><td><div class="node"><i class="branch"></i><svg class="i16"><use href="#plane"/></svg>TOP</div></td><td>2</td><td></td></tr>
    <tr><td><div class="node"><i class="branch"></i><svg class="i16"><use href="#plane"/></svg>FRONT</div></td><td>3</td><td></td></tr>
    <tr><td><div class="node"><i class="branch"></i><svg class="i16"><use href="#bcs"/></svg>PRT_CSYS_DEF</div></td><td>4</td><td></td></tr>
    <tr><td><div class="node"><i class="branch"></i><svg class="i16"><use href="#skt"/></svg>草绘 2</div></td><td>5</td><td></td></tr>
    <tr><td><div class="node"><i class="branch fold"><i class="tri"></i></i><svg class="i16"><use href="#patt"/></svg>阵列 1 / 草绘 1</div></td><td>6</td><td></td></tr>
    <tr><td colspan="3" class="line-cell"><div class="insert-line"></div></td></tr>
    <tr><td><div class="node"><i class="branch last"></i><svg class="i16"><use href="#skt"/></svg><span><svg width="9" height="9" viewBox="0 0 9 9" class="align-top"><path d="M4.500 0v9M0 4.500h9M1 1l7 7M8 1L1 8" stroke="#555"/><path d="M2 2h5v5H2z" fill="#ffe800"/></svg>草绘 3</span></div></td><td class="none-cell">&lt;无&gt;</td><td></td></tr>
    </tbody>
   </table>
  </div>
 </aside>
 <aside class="item-panel d-flex flex-column flex-shrink-0">
  <div class="ptabs"></div>
  <div class="ptools">
   <svg class="i16 text-success"><use href="#sheet"/></svg><span class="dots"></span><span></span>
   <svg class="i16"><use href="#lst"/></svg><svg class="i16"><use href="#lst2"/></svg>
   <button class="toggle" aria-label="列"><svg class="i16"><use href="#colsg"/></svg></button><span class="bar"></span>
   <span class="more">»</span><svg width="18" height="20"><use href="#doc"/></svg>
  </div>
  <div class="d-flex align-items-center ps-1">
   <svg class="i16 me-1"><use href="#fun"/></svg>
   <div class="find d-flex align-items-center flex-fill"><input type="text" aria-label="搜索设计项"><button aria-label="清除"><svg width="10" height="10" viewBox="0 0 10 10"><path d="M1 1l8 8M9 1L1 9" stroke="#999" stroke-width="1.300"/></svg></button></div>
   <i class="caret"></i><button class="add" aria-label="添加"><svg width="12" height="12" viewBox="0 0 12 12"><path d="M6 0v12M0 6h12" stroke="#96999a" stroke-width="3"/></svg></button>
  </div>
  <div class="item-nodes d-flex flex-column">
   <div class="node"><svg class="i16"><use href="#part"/></svg>PRT0002.PRT</div>
   <div class="node"><i class="tri fold-tri"></i><svg class="i16 text-info"><use href="#sheet"/></svg>设计项</div>
  </div>
 </aside>
 <section class="gfx flex-fill position-relative">
  <div class="view-bar">
   <button aria-label="重新调整"><svg class="i20"><use href="#v1"/></svg></button>
   <button aria-label="放大"><svg class="i20" viewBox="0 0 22 22"><use href="#mag"/><path d="M9 4v8M5 8h8" stroke="#1b6f94" stroke-width="2"/></svg></button>
   <button aria-label="缩小"><svg class="i20" viewBox="0 0 22 22"><use href="#mag"/><path d="M5 8h8" stroke="#1b6f94" stroke-width="2"/></svg></button>
   <button aria-label="重画"><svg class="i20"><use href="#v4"/></svg></button>
   <button aria-label="显示样式"><svg class="i20"><use href="#v5"/></svg></button>
   <button aria-label="已保存方向"><svg class="i20"><use href="#v6"/></svg></button>
   <button aria-label="视图管理器"><svg class="i20"><use href="#v7"/></svg></button>
   <button aria-label="视图法向"><svg class="i20"><use href="#v8"/></svg></button>
   <button aria-label="截面"><svg class="i20"><use href="#v9"/></svg></button>
   <button aria-label="基准显示"><svg class="i20"><use href="#v10"/></svg></button>
   <button aria-label="平面显示"><svg class="i20"><use href="#v11"/></svg></button>
   <button class="down" aria-label="轴显示"><svg class="i20"><use href="#v12"/></svg></button>
   <button aria-label="点显示"><svg class="i20"><use href="#v13"/></svg></button>
   <button aria-label="坐标系显示"><svg class="i20"><use href="#v14"/></svg></button>
   <button aria-label="草绘视图"><svg class="i20"><use href="#v15"/></svg></button>
   <button aria-label="修剪模型"><svg class="i20"><use href="#v16"/></svg></button>
   <button aria-label="透视图"><svg class="i20"><use href="#v17"/></svg></button>
   <button aria-label="尺寸显示"><svg class="i20"><use href="#v18"/></svg></button>
   <button aria-label="约束显示"><svg class="i20"><use href="#v19"/></svg></button>
   <button class="down" aria-label="注释显示"><svg class="i20"><use href="#v20"/></svg></button>
   <button class="cutoff" aria-label="连接"><svg class="i20"><use href="#v21"/></svg></button>
  </div>
  <svg class="scene" aria-hidden="true"><g transform="translate(-443 -162)" stroke="#0850e0" stroke-width="1.200">
   <path d="M1005 456.500L1153 413.500H1269L1172 456.500z"/><path d="M949 555.500L1097 512.500H1213L1116 555.500z"/><path d="M893 654.500L1041 611.500H1158L1061 654.500z"/><path d="M838 753.500L985 710.500H1102L1005 753.500z"/><path d="M1323 518L1225 693"/></g></svg>
  <div class="note note-a">阵列形成的草绘,无法一次性投影</div>
  <div class="note note-b">一个一个的连选,效率低下</div>
  <div class="logo"><div class="logo-name">野火</div>
   <svg viewBox="0 0 24 52"><path d="M8 0c12 12 16 24 8 33-3 4-8 9-12 6-2-2 1-4 4-6 8-6 4-16-4-24 7 4 9 9 9 14 3-8 0-15-5-23z" fill="#ff6833"/></svg>
   <div class="logo-url">www.proewildfire.cn</div></div>
 </section>
</main>

<svg class="overlay" aria-hidden="true"><g fill="#ff2012">
 <path d="M730 100L440 237 270 322.500 111.500 400 108.500 396.500 99 411.500H116L115 408.500 270 333 440 245 730 102z"/>
 <path d="M782 504.500L989.500 450 987 447 1004.500 451.500 991 463 988.500 459.500 782 506z"/>
 <path d="M789 508.500L907.500 539.500 907 535 919.500 548.500 901 552 904 548.500 789 510z"/>
 <path d="M794 531.500L877.500 624 880 618.500 883.500 637.500 866 630.500 869.500 629 793.500 532.500z"/>
 <path d="M787 549L842.500 723 846.500 719 842.500 737.500 829 725 833.500 725.500 786 549.500z"/>
</g></svg>

<script src="https://cdn.jsdelivr.net/npm/bootstrap@5.3.0/dist/js/bootstrap.bundle.min.js"></script>
</body>
</html>
